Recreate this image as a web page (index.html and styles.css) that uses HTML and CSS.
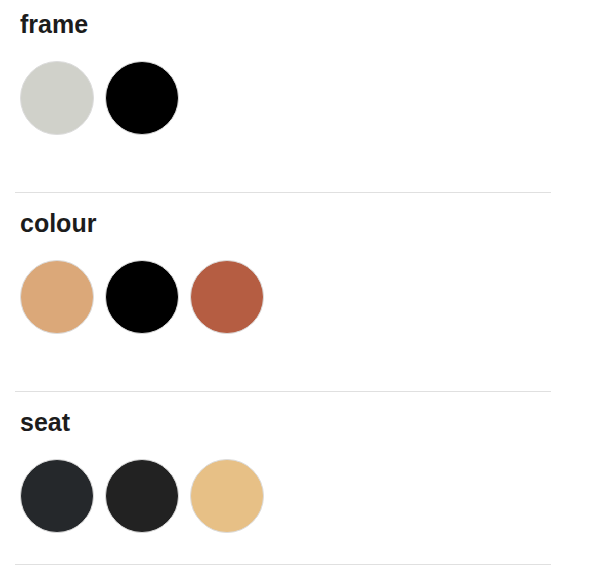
FILE: index.html
```html
<!DOCTYPE html>
<html lang="en">
<head>
  <meta charset="UTF-8" />
  <meta name="viewport" content="width=device-width, initial-scale=1.0">
  <title>Options</title>
<link rel="stylesheet" href="styles.css">
</head>
<body>
  <div class="options">
    <div class="option">
      <h2>frame</h2>
      <div class="swatches">
        <span class="swatch" style="background: #d0d1ca"></span>
        <span class="swatch" style="background: #000000"></span>
      </div>
    </div>
    <div class="option">
      <h2>colour</h2>
      <div class="swatches">
        <span class="swatch" style="background: #dba879"></span>
        <span class="swatch" style="background: #000000"></span>
        <span class="swatch" style="background: #b55d42"></span>
      </div>
    </div>
    <div class="option">
      <h2>seat</h2>
      <div class="swatches">
        <span class="swatch" style="background: #25282b"></span>
        <span class="swatch" style="background: #222222"></span>
        <span class="swatch" style="background: #e7c086"></span>
      </div>
    </div>
  </div>
</body>
</html>
```

FILE: styles.css
```css
body {
  margin: 0;
  font-family: "Liberation Sans", Arial, sans-serif;
  color: #1c1c1c;
  background: #fff;
}

.options {
  width: 536px;
  margin-left: 15px;
}

.option {
  padding: 16px 5px 57px;
  border-bottom: 1px solid #e0e0e0;
}

.option:first-child {
  padding-top: 10px;
}

.option:last-child {
  padding-bottom: 31px;
}

h2 {
  font-size: 25px;
  line-height: 28px;
  margin: 0 0 23px;
  font-weight: bold;
}

.swatches {
  display: flex;
  gap: 11px;
}

.swatch {
  width: 74px;
  height: 74px;
  border-radius: 50%;
  box-sizing: border-box;
  border: 1px solid #dcdcdc;
}
```
